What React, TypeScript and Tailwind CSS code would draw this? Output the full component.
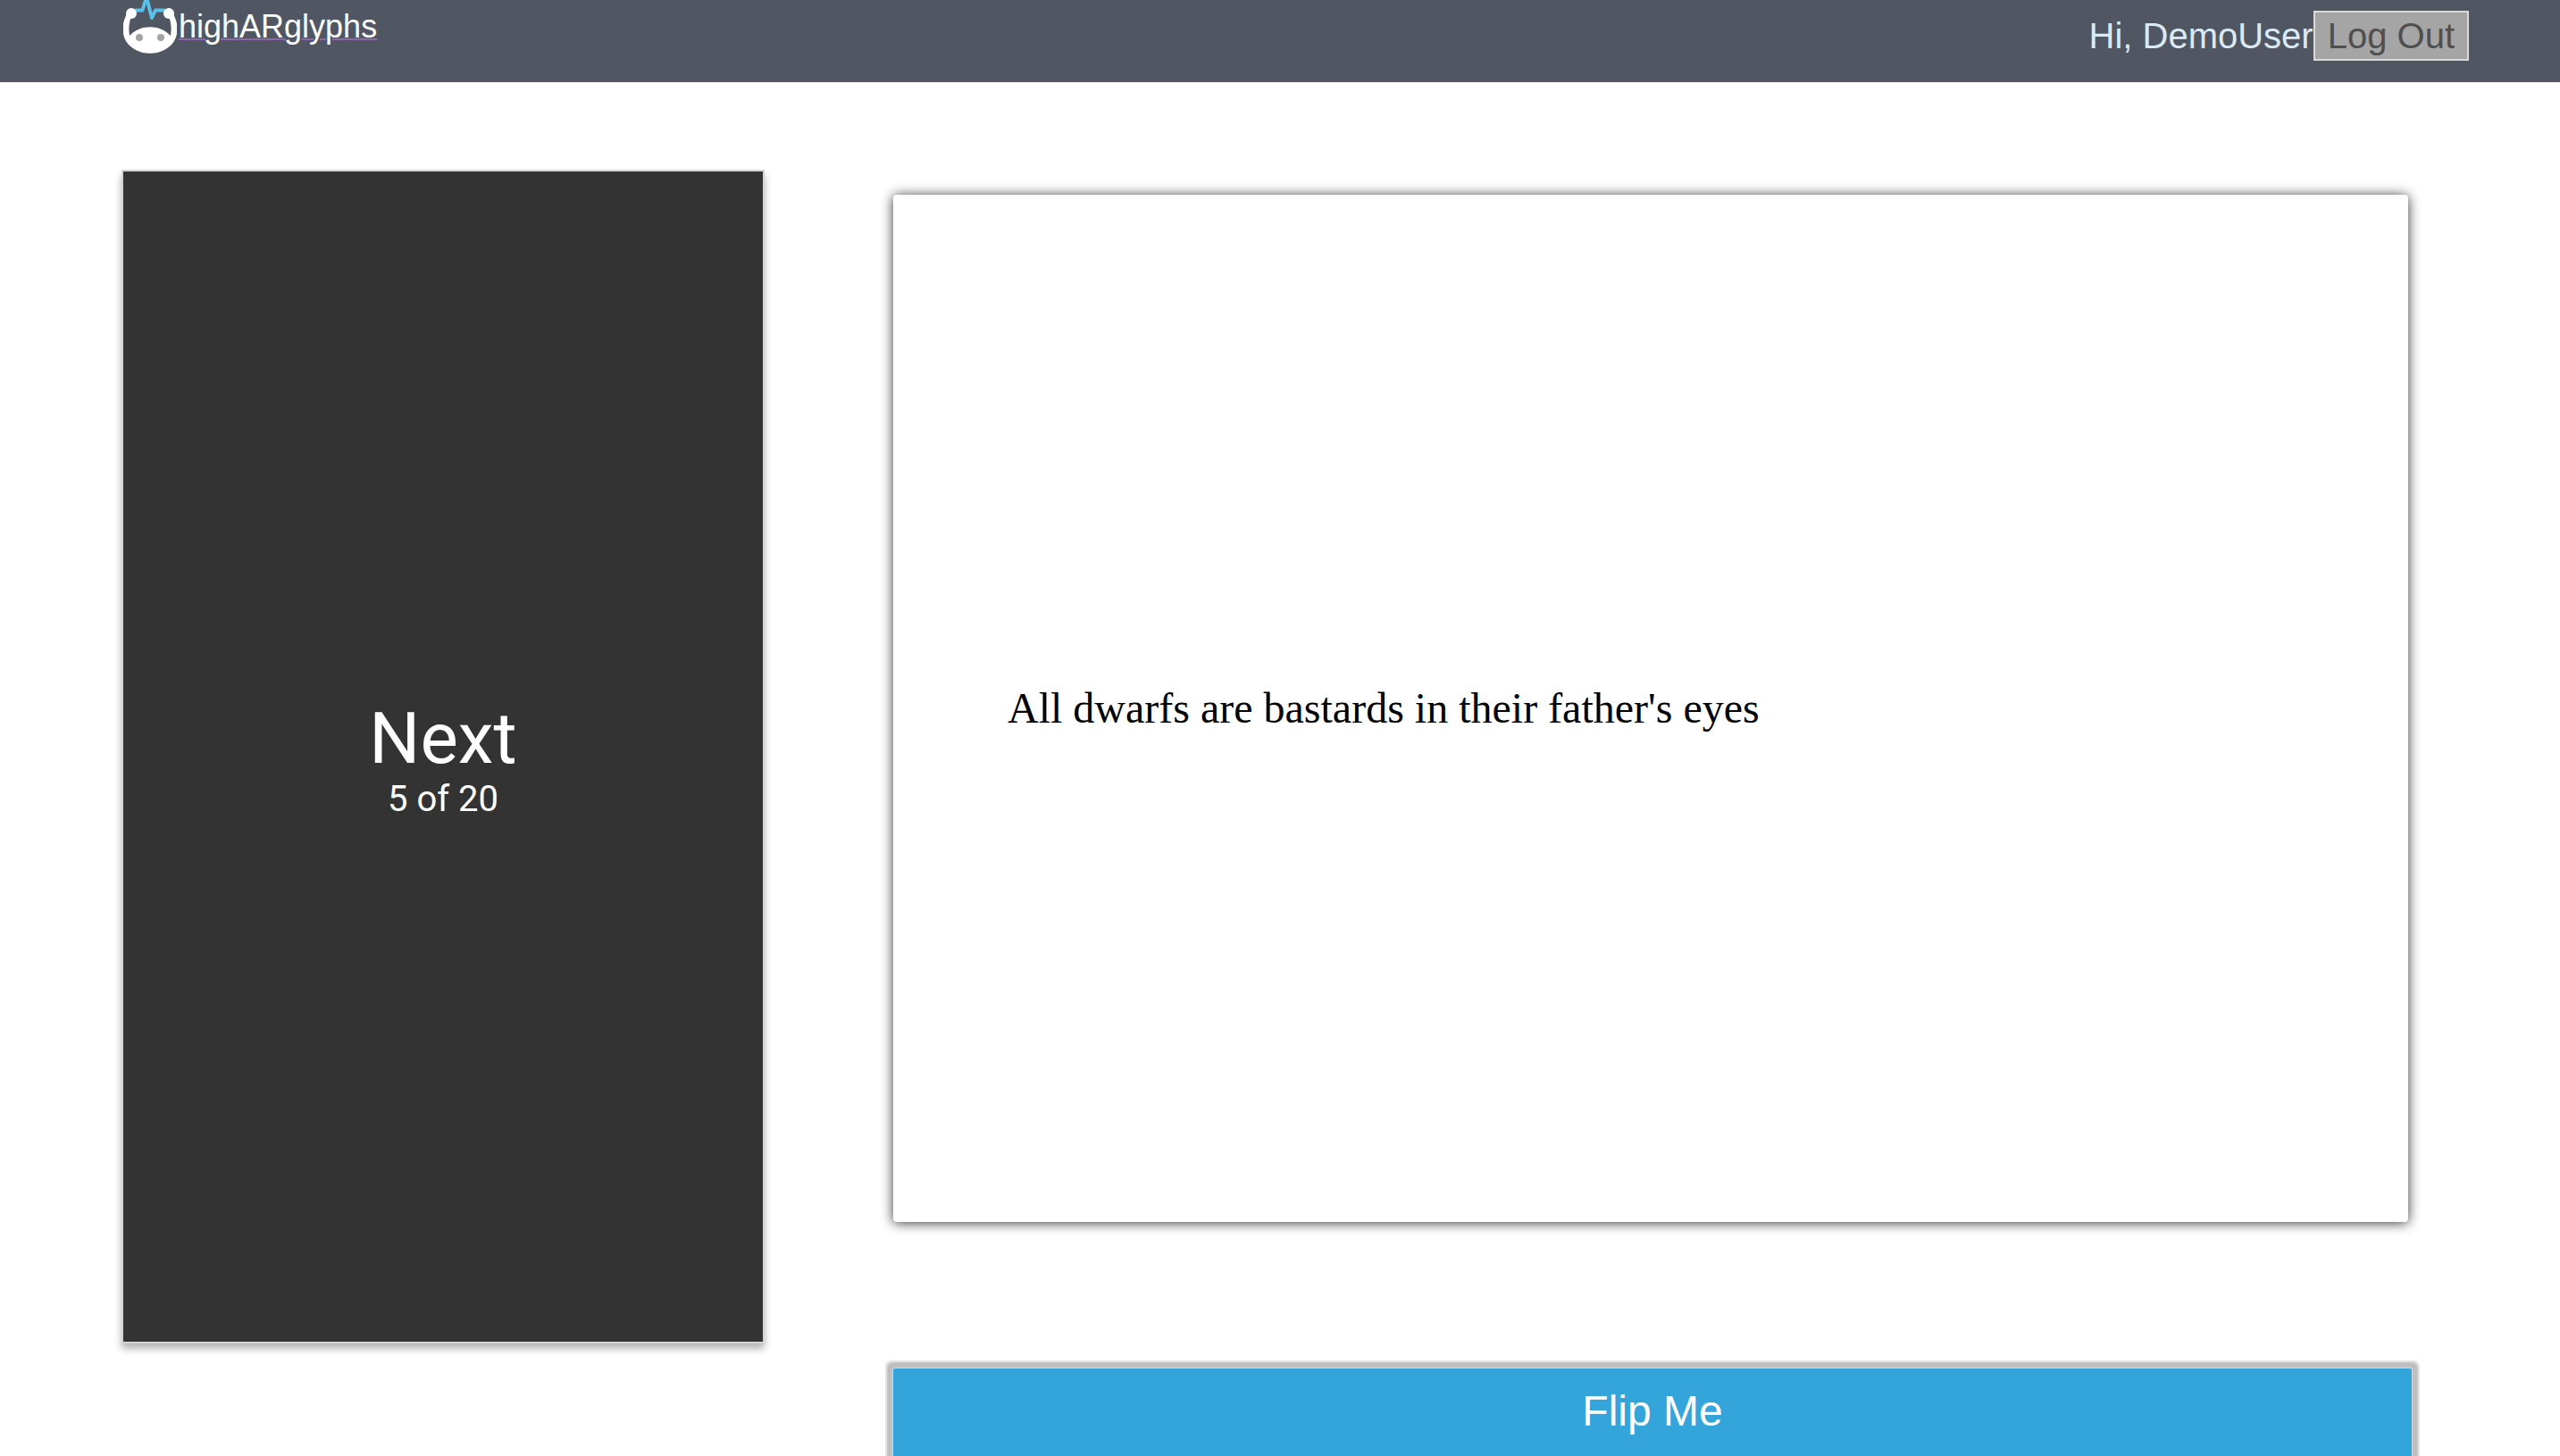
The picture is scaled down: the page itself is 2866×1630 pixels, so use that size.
function Logo() {
  return (
    <svg width="60" height="60" viewBox="0 0 60 60" aria-hidden="true">
      <path d="M13 11.5h8.5L26 -3l6 23 4-8.5h11" fill="none" stroke="#5bc0e8" strokeWidth="4" strokeLinejoin="round" />
      <circle cx="9" cy="15" r="6" fill="#fff" />
      <circle cx="51" cy="15" r="6" fill="#fff" />
      <path d="M5 14C-2 25-3 40 6 50c13 13 35 13 48 0 9-10 8-25 1-36l-4 5c3 7 3 14 2 21-12-13-34-13-46 0-1-7-1-14 2-21z" fill="#fff" />
      <circle cx="18" cy="42" r="4" fill="#a3a3a3" />
      <circle cx="42" cy="42" r="4" fill="#a3a3a3" />
    </svg>
  );
}

export default function App() {
  return (
    <div className="min-h-screen overflow-hidden bg-white font-['Liberation_Sans',Arial,sans-serif]">
      <header className="flex h-[92px] items-start justify-between bg-[#505762] pr-[102px] pl-[138px]">
        <a href="#home" className="flex items-start gap-[2px] text-[36px] leading-[60px] text-white">
          <Logo />
          <span className="underline decoration-[#8d66ad] decoration-2">highARglyphs</span>
        </a>
        <div className="flex items-center pt-3 text-[40px] leading-[52px]">
          <span className="text-[#dbe9f5]">Hi, DemoUser</span>
          <button type="button" className="border-2 border-[#dadada] bg-[#a5a5a5] px-[14px] text-[#4f4f4f]">Log Out</button>
        </div>
      </header>
      <main className="grid grid-cols-[720fr_1700fr] items-start gap-[144px] pt-[98px] pr-[166px] pl-[136px]">
        <button
          type="button"
          className="flex h-[1314px] flex-col items-center justify-center border-2 border-[#d3d3d3] bg-[#333333] pt-3 font-[Roboto,sans-serif] text-white shadow-[0_6px_8px_rgba(0,0,0,0.3)]"
        >
          <span className="text-[80px] leading-[84px]">Next</span>
          <span className="text-[40px] leading-[52px]">5 of 20</span>
        </button>
        <section className="flex flex-col gap-[164px] pt-7">
          <article className="mr-1 flex h-[1150px] items-center rounded-[4px] bg-white px-32 shadow-[0_1px_14px_rgba(0,0,0,0.8)]">
            <p className="font-['Liberation_Serif',serif] text-[48px] leading-[56px] text-black">All dwarfs are bastards in their father's eyes</p>
          </article>
          <button
            type="button"
            className="rounded-t-[2px] bg-[#33a5da] pt-5 pb-6 text-[48px] leading-[56px] text-white shadow-[0_0_0_1px_#d8d8d8,0_0_0_6px_#bfbfc1,0_0_0_7px_#c8c8ca,0_0_0_9px_#e3e3e4]"
          >
            Flip Me
          </button>
        </section>
      </main>
    </div>
  );
}
